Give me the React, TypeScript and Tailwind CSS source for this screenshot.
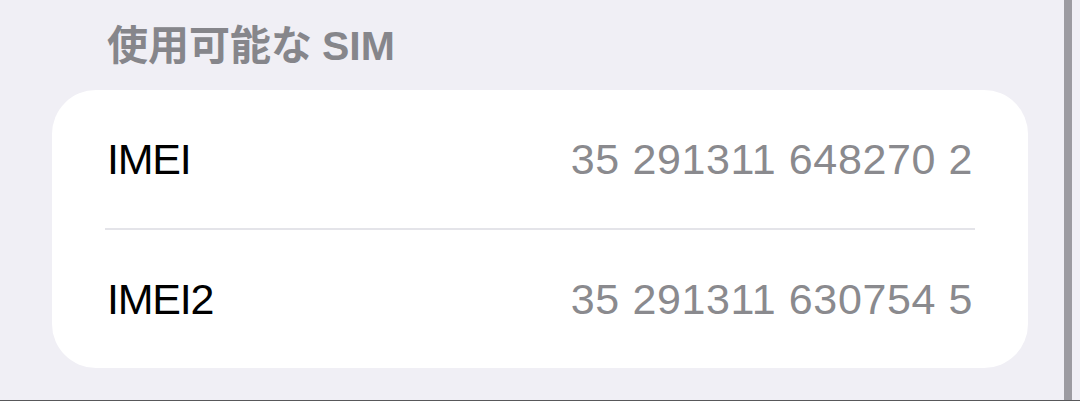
const rows = [
  { label: 'IMEI', value: '35 291311 648270 2' },
  { label: 'IMEI2', value: '35 291311 630754 5' },
];

export default function App() {
  return (
    <div
      className="flex h-[401px] w-[1080px] flex-col border-b border-[#58585a] bg-[#f0eff5]"
      style={{ fontFamily: '"Liberation Sans", "Noto Sans CJK JP", sans-serif' }}
    >
      <div className="flex flex-1">
        <div className="flex-1 pl-[52px] pr-[36px]">
          <div className="h-[90px] pl-[55px] pt-[23px] text-[41px] font-semibold leading-[46px] text-[#86868b]">
            使用可能な<span className="ml-[10px]">SIM</span>
          </div>
          <div className="rounded-[44px] bg-white">
            {rows.map((r, i) => (
              <div key={r.label}>
                {i > 0 && <div className="mx-[53px] h-[2px] bg-[#e4e4e9]" />}
                <div className="flex h-[138px] items-center justify-between px-[55px] text-[43px]">
                  <span className="tracking-[-1.2px] text-black">{r.label}</span>
                  <span className="tracking-[0.6px] text-[#8a8a8e]">{r.value}</span>
                </div>
              </div>
            ))}
          </div>
        </div>
        <div className="w-[8px] bg-[#9c9ba1]" />
        <div className="w-[8px]" />
      </div>
    </div>
  );
}
